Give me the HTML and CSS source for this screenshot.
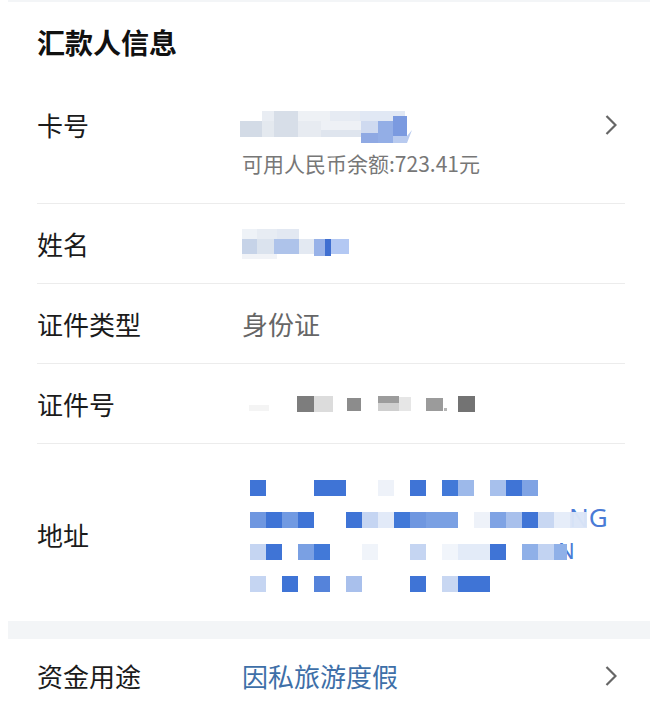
FILE: index.html
```html
<!DOCTYPE html>
<html>
<head>
    <title>汇款人信息</title>
    <link rel="stylesheet" href="styles.css">
</head>
<body>
    <div class="band band-top"></div>

    <div class="section">
        <h2 class="section-title">汇款人信息</h2>

        <div class="row row-card">
            <div class="row-main">
                <span class="label">卡号</span>
                <div class="value">
                    <svg class="mask mask-card" width="175" height="35" viewBox="0 0 175 35">
                        <rect x="22" y="3" width="28" height="10" fill="#e9edf3"/>
                        <rect x="50" y="3" width="40" height="10" fill="#eef1f5"/>
                        <rect x="90" y="3" width="30" height="10" fill="#e6ebf3"/>
                        <rect x="120" y="3" width="45" height="10" fill="#e1e8f4"/>
                        <rect x="0" y="13" width="22" height="16" fill="#d3dbe6"/>
                        <rect x="22" y="13" width="12" height="16" fill="#e4e9ef"/>
                        <rect x="34" y="3" width="24" height="26" fill="#d7dee8"/>
                        <rect x="58" y="13" width="23" height="16" fill="#e7ebf1"/>
                        <rect x="81" y="13" width="40" height="16" fill="#eef1f6"/>
                        <rect x="81" y="22" width="40" height="7" fill="#dfe5ee"/>
                        <rect x="121" y="13" width="17" height="12" fill="#cfdaf0"/>
                        <rect x="121" y="25" width="17" height="10" fill="#8fa9e3"/>
                        <rect x="138" y="13" width="15" height="22" fill="#93aee6"/>
                        <rect x="153" y="8" width="14" height="20" fill="#7b9ae0"/>
                        <polygon points="153,28 167,28 172,22 167,35 153,35" fill="#b8caef"/>
                    </svg>
                </div>
                <svg class="chevron" viewBox="0 0 12 20"><polyline points="1.5,1 10.5,10 1.5,19"/></svg>
            </div>
            <div class="sub">可用人民币余额:723.41元</div>
        </div>

        <div class="row">
            <span class="label">姓名</span>
            <div class="value">
                <svg class="mask" width="110" height="30" viewBox="0 0 110 30">
                    <rect x="0" y="0" width="15" height="10" fill="#eef2f7"/>
                    <rect x="15" y="0" width="20" height="10" fill="#e7ecf3"/>
                    <rect x="35" y="0" width="22" height="10" fill="#e2e8f2"/>
                    <rect x="0" y="10" width="15" height="15" fill="#c6d3e8"/>
                    <rect x="15" y="10" width="17" height="15" fill="#dbe3ee"/>
                    <rect x="32" y="10" width="25" height="15" fill="#aec3ea"/>
                    <rect x="57" y="10" width="15" height="15" fill="#e3e9f2"/>
                    <rect x="72" y="10" width="11" height="17" fill="#98b2e8"/>
                    <rect x="83" y="10" width="6" height="17" fill="#3f6fd1"/>
                    <rect x="89" y="10" width="18" height="15" fill="#b3c8f3"/>
                    <rect x="0" y="25" width="35" height="5" fill="#f1f3f7"/>
                </svg>
            </div>
        </div>

        <div class="row">
            <span class="label">证件类型</span>
            <div class="value">身份证</div>
        </div>

        <div class="row">
            <span class="label">证件号</span>
            <div class="value">
                <svg class="mask mask-id" width="235" height="22" viewBox="0 0 235 22">
                    <rect x="4" y="12" width="20" height="6" fill="#f4f4f4"/>
                    <rect x="52" y="3" width="17" height="16" fill="#7d7d7d"/>
                    <rect x="69" y="3" width="19" height="16" fill="#dcdcdc"/>
                    <rect x="102" y="5" width="14" height="13" fill="#8c8c8c"/>
                    <rect x="133" y="3" width="21" height="7" fill="#9c9c9c"/>
                    <rect x="133" y="10" width="21" height="8" fill="#cfcfcf"/>
                    <rect x="154" y="4" width="12" height="14" fill="#e6e6e6"/>
                    <rect x="181" y="5" width="17" height="13" fill="#9b9b9b"/>
                    <rect x="199" y="15" width="3" height="3" fill="#b5b5b5"/>
                    <rect x="213" y="3" width="17" height="16" fill="#737373"/>
                </svg>
            </div>
        </div>

        <div class="row row-address">
            <span class="label">地址</span>
            <div class="value">
                <svg class="mask" width="370" height="128" viewBox="0 0 370 128">
                    <g class="r1">
                        <rect x="8" y="9" width="16" height="16" fill="#3f74d6"/>
                        <rect x="72" y="9" width="32" height="16" fill="#3f74d6"/>
                        <rect x="136" y="9" width="16" height="16" fill="#eef2f9"/>
                        <rect x="168" y="9" width="16" height="16" fill="#3f74d6"/>
                        <rect x="200" y="9" width="16" height="16" fill="#4279d8"/>
                        <rect x="216" y="9" width="16" height="16" fill="#9db9ea"/>
                        <rect x="248" y="9" width="16" height="16" fill="#a7c0ec"/>
                        <rect x="264" y="9" width="16" height="16" fill="#3f74d6"/>
                        <rect x="280" y="9" width="16" height="16" fill="#7fa3e4"/>
                    </g>
                    <g class="r2">
                        <rect x="8" y="41" width="16" height="16" fill="#6f97e0"/>
                        <rect x="24" y="41" width="16" height="16" fill="#3f74d6"/>
                        <rect x="40" y="41" width="16" height="16" fill="#719ae2"/>
                        <rect x="56" y="41" width="16" height="16" fill="#3f74d6"/>
                        <rect x="104" y="41" width="16" height="16" fill="#3f74d6"/>
                        <rect x="120" y="41" width="16" height="16" fill="#c5d5f2"/>
                        <rect x="136" y="41" width="16" height="16" fill="#e2eaf8"/>
                        <rect x="152" y="41" width="16" height="16" fill="#4279d8"/>
                        <rect x="168" y="41" width="16" height="16" fill="#6f97e0"/>
                        <rect x="184" y="41" width="32" height="16" fill="#7aa0e3"/>
                        <rect x="232" y="41" width="16" height="16" fill="#eef2f9"/>
                        <rect x="248" y="41" width="16" height="16" fill="#7fa3e4"/>
                        <rect x="264" y="41" width="16" height="16" fill="#a8c0ec"/>
                        <rect x="280" y="41" width="16" height="16" fill="#3f74d6"/>
                        <rect x="296" y="41" width="16" height="16" fill="#c8d7f2"/>
                        <rect x="312" y="41" width="16" height="16" fill="#e6edf9"/>
                        <text class="leak" x="327" y="56">NG</text>
                        <rect x="328" y="41" width="17" height="16" fill="#dbe5f7" fill-opacity="0.97"/>
                    </g>
                    <g class="r3">
                        <rect x="8" y="73" width="16" height="16" fill="#c5d5f2"/>
                        <rect x="24" y="73" width="16" height="16" fill="#3f74d6"/>
                        <rect x="56" y="73" width="16" height="16" fill="#7aa0e3"/>
                        <rect x="72" y="73" width="16" height="16" fill="#4279d8"/>
                        <rect x="120" y="73" width="16" height="16" fill="#f0f4fa"/>
                        <rect x="168" y="73" width="16" height="16" fill="#c5d5f2"/>
                        <rect x="200" y="73" width="16" height="16" fill="#f1f5fb"/>
                        <rect x="216" y="73" width="32" height="16" fill="#e3ebf8"/>
                        <rect x="248" y="73" width="16" height="16" fill="#3f74d6"/>
                        <text class="leak leak-small" x="316" y="88">N</text>
                        <rect x="280" y="73" width="16" height="16" fill="#8fb0e8"/>
                        <rect x="296" y="73" width="16" height="16" fill="#c2d3f2"/>
                        <rect x="312" y="73" width="13" height="16" fill="#8fb0e8"/>
                    </g>
                    <g class="r4">
                        <rect x="8" y="105" width="16" height="16" fill="#c5d5f2"/>
                        <rect x="40" y="105" width="16" height="16" fill="#3f74d6"/>
                        <rect x="72" y="105" width="16" height="16" fill="#5583da"/>
                        <rect x="104" y="105" width="16" height="16" fill="#a9c0ec"/>
                        <rect x="168" y="105" width="16" height="16" fill="#3f74d6"/>
                        <rect x="200" y="105" width="16" height="16" fill="#c8d7f2"/>
                        <rect x="216" y="105" width="32" height="16" fill="#3f74d6"/>
                    </g>
                </svg>
            </div>
        </div>
    </div>

    <div class="band"></div>

    <div class="section">
        <div class="row row-last">
            <span class="label">资金用途</span>
            <div class="value value-link">因私旅游度假</div>
            <svg class="chevron" viewBox="0 0 12 20"><polyline points="1.5,1 10.5,10 1.5,19"/></svg>
        </div>
    </div>
</body>
</html>
```

FILE: styles.css
```css
body {
    margin: 0;
    background: #fff;
    color: #1b1b1b;
    font-family: "Noto Sans CJK SC", "Noto Sans", sans-serif;
}

.band {
    height: 18px;
    margin: 0 11px 0 8px;
    background-color: #f3f5f7;
}

.band-top {
    height: 2px;
}

.section {
    padding: 0 36px 0 37px;
}

.section-title {
    margin: 0;
    padding: 20px 0 23px;
    font-size: 28px;
    line-height: 40px;
    font-weight: 700;
    color: #111;
}

.row {
    display: flex;
    align-items: center;
    height: 80px;
    border-bottom: 1px solid #ececec;
    box-sizing: border-box;
}

.label {
    width: 205px;
    flex-shrink: 0;
    font-size: 26px;
    line-height: 40px;
}

.value {
    flex: 1;
    font-size: 26px;
    line-height: 40px;
    color: #666;
}

.mask {
    display: block;
}

.mask-card {
    margin-left: -2px;
}

.mask-id {
    margin-left: 3px;
}

.chevron {
    width: 12px;
    height: 20px;
    margin-right: 8px;
    flex-shrink: 0;
}

.chevron polyline {
    fill: none;
    stroke: #666;
    stroke-width: 2.2;
}

.row-card {
    display: block;
    height: auto;
    padding: 20px 0 26px;
}

.row-main {
    display: flex;
    align-items: center;
    height: 40px;
}

.sub {
    margin-top: 4px;
    padding-left: 205px;
    font-size: 21px;
    line-height: 28px;
    color: #777;
}

.row-address {
    height: auto;
    padding: 27px 0 22px;
    border-bottom: none;
}

.leak {
    font-family: "Noto Sans", sans-serif;
    font-size: 26px;
    fill: #4a7bd6;
}

.leak-small {
    font-size: 22px;
}

.row-last {
    height: 76px;
    border-bottom: none;
    padding-bottom: 2px;
}

.value-link {
    color: #3e6fa8;
}
```
